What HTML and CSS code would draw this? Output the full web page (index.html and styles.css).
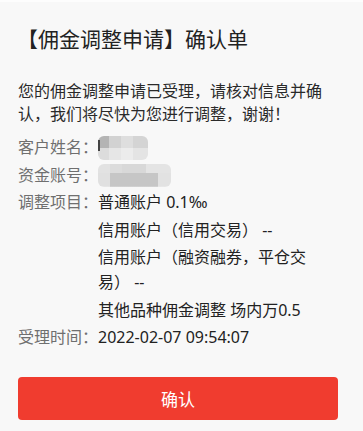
FILE: index.html
```html
<!DOCTYPE html>
<html lang="zh-CN">
<head>
<meta charset="utf-8">
<title>确认单</title>
<link rel="stylesheet" href="styles.css">
</head>
<body>
<div class="page">
  <h1 class="title">【佣金调整申请】确认单</h1>
  <p class="intro">您的佣金调整申请已受理，请核对信息并确认，我们将尽快为您进行调整，谢谢！</p>
  <div class="rows">
    <div class="row">
      <div class="label">客户姓名：</div>
      <div class="value"><span class="blur blur-name"><i class="tick"></i></span></div>
    </div>
    <div class="row">
      <div class="label">资金账号：</div>
      <div class="value"><span class="blur blur-acct"></span></div>
    </div>
    <div class="row">
      <div class="label">调整项目：</div>
      <div class="value items">
        <div class="item">普通账户 0.1‰</div>
        <div class="item">信用账户（信用交易） --</div>
        <div class="item">信用账户（融资融券，平仓交易） --</div>
        <div class="item">其他品种佣金调整 场内万0.5</div>
      </div>
    </div>
    <div class="row">
      <div class="label">受理时间：</div>
      <div class="value">2022-02-07 09:54:07</div>
    </div>
  </div>
  <button class="confirm" type="button">确认</button>
</div>
</body>
</html>
```
FILE: styles.css
```css
html, body {
  margin: 0;
  padding: 0;
}
body {
  background: #f8f8f8;
  font-family: "Noto Sans", "Noto Sans CJK SC", sans-serif;
  color: #222;
  width: 363px;
  height: 431px;
  overflow: hidden;
}
.page {
  padding: 23px 25px 0 18px;
  border-top: 2px solid #fdfdfd;
  box-sizing: border-box;
  height: 431px;
  display: flex;
  flex-direction: column;
}
.title {
  margin: 0;
  font-size: 21px;
  font-weight: 400;
  line-height: 28px;
  color: #222;
  margin-left: -1px;
}
.intro {
  margin: 27px 0 0;
  font-size: 16px;
  line-height: 22.5px;
  color: #2a2a2a;
}
.rows {
  margin-top: 10px;
  display: flex;
  flex-direction: column;
  gap: 2.5px;
}
.row {
  display: flex;
  font-size: 16px;
  line-height: 25px;
}
.label {
  width: 80px;
  flex: none;
  color: #6f6f6f;
}
.value {
  color: #222;
  width: 216px;
}
.items {
  display: flex;
  flex-direction: column;
  gap: 2.5px;
}
.blur {
  display: inline-block;
  vertical-align: top;
  border-radius: 6px;
  position: relative;
}
.blur-name {
  width: 50px;
  height: 24px;
  margin-top: 1px;
  background:
    linear-gradient(90deg, #b4b4b4 0 11px, #d2d2d2 11px 23px, #dedede 23px 35px, #d4d4d4 35px 50px) top / 100% 50% no-repeat,
    linear-gradient(90deg, #dcdcdc 0 11px, #e6e6e6 11px 23px, #ececec 23px 35px, #e4e4e4 35px 50px) bottom / 100% 50% no-repeat;
}
.tick {
  position: absolute;
  left: 0;
  top: 4px;
  width: 2px;
  height: 11px;
  background: #444;
}
.blur-acct {
  width: 73px;
  height: 23px;
  margin-top: 1px;
  background:
    linear-gradient(90deg, #e2e2e2 0 12px, #dcdcdc 12px 24px, #d8d8d8 24px 48px, #e4e4e4 48px 73px) top / 100% 40% no-repeat,
    linear-gradient(90deg, #e0e0e0 0 12px, #c6c6c6 12px 60px, #e2e2e2 60px 73px) bottom / 100% 60% no-repeat;
}
.confirm {
  margin-top: 26.5px;
  width: 320px;
  height: 43px;
  border: none;
  border-radius: 4px;
  background: #f03c2f;
  color: #fff;
  font-family: "Noto Sans", "Noto Sans CJK SC", sans-serif;
  font-size: 17px;
  padding: 0;
}
```
